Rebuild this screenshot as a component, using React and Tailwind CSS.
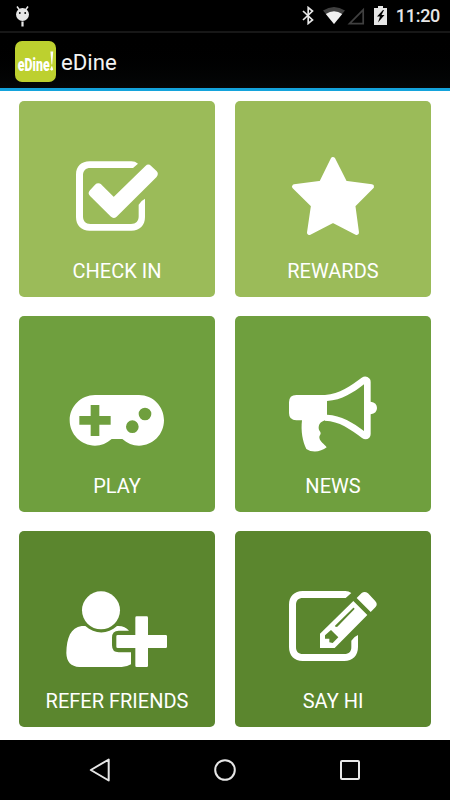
import React from 'react';

const CheckInIcon = () => (
  <svg viewBox="-9 21 360 300" className="w-[120px] h-[100px]" fill="#fff">
    <path d="M89 64H214Q226 64 234 71L219 84H91C77 84 69 92 69 106V229C69 244 77 252 91 252H213C228 252 236 244 236 229V194Q241 183 255 176V231C255 256 239 272 214 272H89C64 272 48 256 48 231V104C48 79 64 64 89 64Z" />
    <path
      d="M115 142L161 188L265 87L281 102L161 221L99 159Z"
      stroke="#fff"
      strokeWidth="25"
      strokeLinejoin="round"
    />
  </svg>
);

const RewardsIcon = () => (
  <svg viewBox="-6 21 360 300" className="w-[120px] h-[100px]" fill="#fff">
    <path
      d="M174 58L210 129L290 140L234 196L245 278L174 241L103 278L115 196L58 140L139 129Z"
      stroke="#fff"
      strokeWidth="14"
      strokeLinejoin="round"
    />
  </svg>
);

const PlayIcon = () => (
  <svg viewBox="-9 -24 360 300" className="w-[120px] h-[100px]" fill="#fff">
    <path
      fillRule="evenodd"
      d="M105 75H237C279 75 312 109 312 151C312 193 279 227 237 227C218 227 201 220 187 207H155C141 220 124 227 105 227C63 227 29 193 29 151C29 109 63 75 105 75ZM92 105V138H58V164H92V198H118V164H152V138H118V105ZM255 113A19 19 0 1 0 255 151A19 19 0 1 0 255 113ZM217 151A19 19 0 1 0 217 189A19 19 0 1 0 217 151Z"
    />
  </svg>
);

const NewsIcon = () => (
  <svg viewBox="-6 -9 360 300" className="w-[120px] h-[100px]" fill="#fff">
    <path d="M64 90H156V166H150C135 171 131 179 131 190C131 197 137 200 137 205C137 210 133 211 133 217C134 231 148 237 155 247C138 261 111 264 94 252C83 230 77 199 81 166H64Q42 166 42 144V112Q42 90 64 90Z" />
    <path
      fillRule="evenodd"
      d="M150 90C194 86 227 63 260 38Q273 30 284 41Q287 44 287 51V110Q306 113 306 129Q306 145 287 148V207Q287 214 283 218Q273 227 261 219C227 193 192 168 150 167ZM156 108V149C199 151 234 173 267 198V58C236 82 201 106 156 108Z"
    />
  </svg>
);

const ReferIcon = () => (
  <svg viewBox="51 -9 360 300" className="w-[120px] h-[100px]" fill="#fff">
    <circle cx="183" cy="91" r="57" />
    <path d="M125 138H136C164 164 204 164 231 138C247 137 259 142 267 152H236Q216 152 216 173V196Q216 217 236 217H273V253Q260 261 245 261H118Q80 259 79 219C80 173 92 143 125 138Z" />
    <path d="M290 109H320Q324 109 324 113V165H377Q381 165 381 169V200Q381 204 377 204H324V257Q324 261 320 261H290Q286 261 286 257V204H233Q229 204 229 200V169Q229 165 233 165H286V113Q286 109 290 109Z" />
  </svg>
);

const SayHiIcon = () => (
  <svg viewBox="-6 -9 360 300" className="w-[120px] h-[100px]" fill="#fff">
    <path d="M83 33H211Q221 33 229 39L212 54H84C70 54 63 61 63 75V201C63 215 70 222 84 222H208C222 222 229 215 229 201V182Q235 171 249 165V201C249 227 233 243 208 243H83C58 243 42 227 42 201V74C42 49 58 33 83 33Z" />
    <path d="M245 54L260 39Q269 32 279 40L300 62Q310 72 301 82L287 96Z" />
    <path
      fillRule="evenodd"
      d="M235 63L277 105L179 204H135V161ZM235 83L180 137L182 141L187 140L238 88V84ZM168 150L150 166V176H163V187L173 189L190 172Z"
    />
  </svg>
);

const tiles = [
  { label: 'CHECK IN', color: 'bg-[#9bbb59]', Icon: CheckInIcon },
  { label: 'REWARDS', color: 'bg-[#9bbb59]', Icon: RewardsIcon },
  { label: 'PLAY', color: 'bg-[#6f9f3e]', Icon: PlayIcon },
  { label: 'NEWS', color: 'bg-[#6f9f3e]', Icon: NewsIcon },
  { label: 'REFER FRIENDS', color: 'bg-[#5b862e]', Icon: ReferIcon },
  { label: 'SAY HI', color: 'bg-[#5b862e]', Icon: SayHiIcon },
];

const StatusBar = () => (
  <div className="h-[31px] flex items-center justify-between pl-[15px] pr-[10px]">
    <svg viewBox="0 0 15 22" className="w-[15px] h-[22px]" fill="#e6e6e6">
      <path d="M2 1.5L4.5 5M13 1.5L10.5 5" stroke="#e6e6e6" strokeWidth="1.5" />
      <circle cx="7.5" cy="9.5" r="6.5" />
      <path d="M6.4 16.5H8.6V21.5H6.4Z" />
      <circle cx="4.8" cy="8" r="0.9" fill="#000" />
      <circle cx="10.2" cy="8" r="0.9" fill="#000" />
    </svg>
    <div className="flex items-center">
      <svg viewBox="0 0 12 19" className="w-[12px] h-[19px]" fill="none" stroke="#e6e6e6" strokeWidth="1.7">
        <path d="M1 5L10.5 14L6.2 17.5V1.5L10.5 5L1 14" />
      </svg>
      <svg viewBox="0 0 22 17" className="w-[22px] h-[17px] ml-[9px]">
        <path d="M0 3.5Q11-3.5 22 3.5L11 17Z" fill="#404040" />
        <path d="M2.8 7Q11 1.5 19.2 7L11 17Z" fill="#f0f0f0" />
      </svg>
      <svg viewBox="0 0 18 18" className="w-[18px] h-[18px] ml-[2px]">
        <path d="M2.5 16.6H16.2V2.8Z" fill="none" stroke="#404040" strokeWidth="1.7" />
      </svg>
      <svg viewBox="0 0 13 19" className="w-[13px] h-[19px] ml-[9px]">
        <path d="M4 0H9V2H13V19H0V2H4Z" fill="#e6e6e6" />
        <path d="M9 4L3 10.5H6L4 16.5L10.5 9H7.5L10 4Z" fill="#000" />
      </svg>
      <span className="ml-[9px] text-[18px] leading-none font-medium tracking-[-0.3px] text-[#e6e6e6]">11:20</span>
    </div>
  </div>
);

const NavBar = () => (
  <div className="h-[60px] bg-black flex items-center justify-between px-[89px]">
    <svg viewBox="0 0 22 24" className="w-[22px] h-[24px]" fill="none" stroke="#e6e6e6" strokeWidth="2">
      <path d="M19.7 1.5V22.5L1.8 12Z" strokeLinejoin="round" />
    </svg>
    <svg viewBox="0 0 22 22" className="w-[22px] h-[22px] mr-[2px]" fill="none" stroke="#e6e6e6" strokeWidth="2">
      <circle cx="11" cy="11" r="9.8" />
    </svg>
    <div className="w-[20px] h-[20px] mr-[1px] border-2 border-[#e6e6e6] rounded-[2px]" />
  </div>
);

const App = () => {
  return (
    <div className="w-[450px] h-[800px] flex flex-col bg-white overflow-hidden font-[Roboto,sans-serif]">
      <header className="h-[91px] bg-black border-b-3 border-[#14a3dc]">
        <StatusBar />
        <div className="h-[57px] flex items-center pl-[15px] pt-[2px] border-t-2 border-[#171717] bg-linear-to-b from-black to-[#050708]">
          <div className="w-[41px] h-[41px] rounded-[7px] bg-[#bdd02f]">
            <svg viewBox="0 0 41 41" className="w-[41px] h-[41px] overflow-visible" fill="#fff">
              <text
                transform="translate(2.8 29.8) scale(0.67 1)"
                fontFamily="Roboto, sans-serif"
                fontWeight="900"
                fontSize="18.5"
              >
                eDine
              </text>
              <path d="M35.4 10.5H38.2L37.2 23.5H36.5ZM36.9 24.5L38.2 28.5L36.9 29.8L35 28.5Z" />
            </svg>
          </div>
          <h1 className="ml-[5px] pt-[2px] text-[22.2px] leading-none text-[#f3f3f3]">eDine</h1>
        </div>
      </header>

      <main className="flex-1 grid grid-cols-[196px_196px] auto-rows-[196px] gap-x-[20px] gap-y-[19px] pl-[19px] pt-[10px]">
        {tiles.map(({ label, color, Icon }) => (
          <div key={label} className={`${color} rounded-[5px] flex flex-col items-center pt-[46px]`}>
            <Icon />
            <span className="mt-[12px] text-[20px] leading-[24px] text-white whitespace-nowrap">{label}</span>
          </div>
        ))}
      </main>

      <NavBar />
    </div>
  );
};

export default App;
